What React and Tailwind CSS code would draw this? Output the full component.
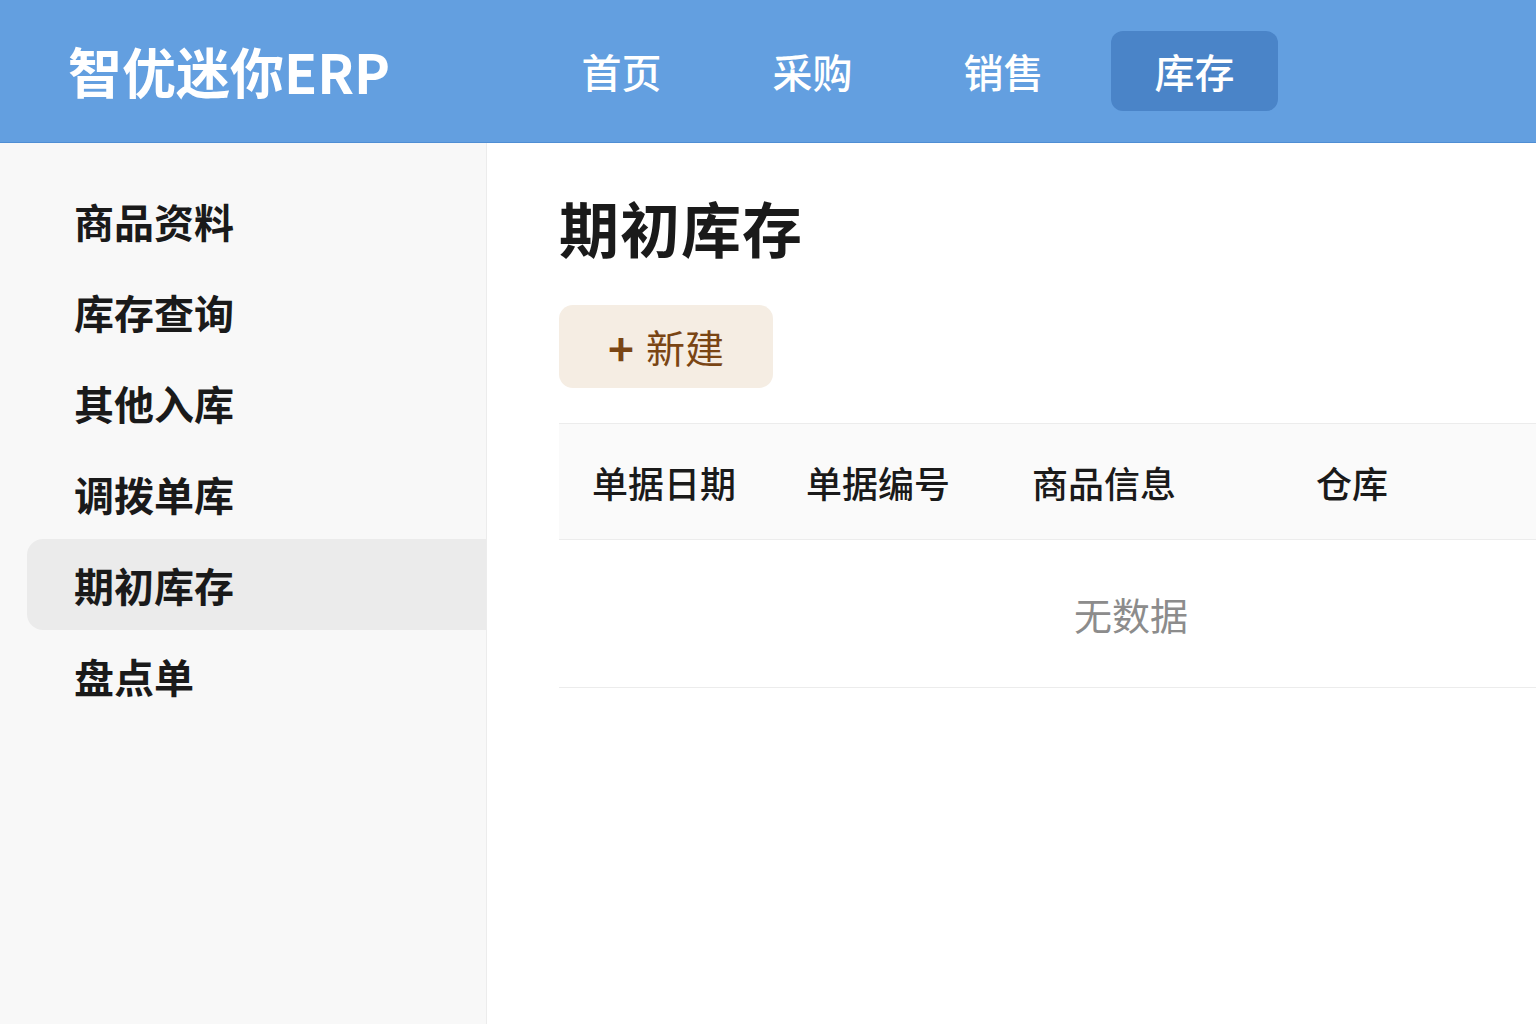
import React from 'react';

const navItems = ['首页', '采购', '销售', '库存'];
const sideItems = ['商品资料', '库存查询', '其他入库', '调拨单库', '期初库存', '盘点单'];
const columns = [
  { label: '单据日期', w: 'w-[214px]' },
  { label: '单据编号', w: 'w-[226px]' },
  { label: '商品信息', w: 'w-[284px]' },
  { label: '仓库', w: 'w-[200px]' },
];

export default function App() {
  const activeNav = '库存';
  const activeSide = '期初库存';

  return (
    <div
      className="h-screen w-full flex flex-col overflow-hidden bg-white text-[#1a1a1a]"
      style={{ fontFamily: '"Noto Sans CJK SC", "Noto Sans", sans-serif' }}
    >
      {/* Header */}
      <header className="h-[143px] flex-shrink-0 flex items-center bg-[#639fe0] border-b border-[#4f8ed4]">
        <div className="w-[538px] pl-[68px] text-white text-[54px] font-bold leading-none">
          智优迷你ERP
        </div>
        <nav className="flex items-center gap-[24px]">
          {navItems.map((item) => (
            <div
              key={item}
              className={`w-[167px] h-[80px] flex items-center justify-center rounded-[12px] text-white text-[40px] font-medium leading-none ${
                item === activeNav ? 'bg-[#4a84c8]' : ''
              }`}
            >
              {item}
            </div>
          ))}
        </nav>
      </header>

      <div className="flex-1 flex min-h-0">
        {/* Sidebar */}
        <aside className="w-[487px] flex-shrink-0 bg-[#f8f8f8] border-r border-[#ececec] pt-[32px]">
          <ul>
            {sideItems.map((item) => (
              <li
                key={item}
                className={`ml-[27px] h-[91px] flex items-center pl-[47px] text-[40px] font-semibold leading-none rounded-l-[16px] ${
                  item === activeSide ? 'bg-[#ebebeb]' : ''
                }`}
              >
                {item}
              </li>
            ))}
          </ul>
        </aside>

        {/* Main */}
        <main className="flex-1 min-w-0 overflow-hidden pl-[72px] pt-[54px]">
          <h1 className="text-[60px] font-bold leading-none tracking-[1px]">期初库存</h1>

          <button
            type="button"
            className="mt-[48px] w-[214px] h-[83px] flex items-center justify-center gap-[12px] rounded-[14px] bg-[#f5ede3] text-[#7a4514] text-[39px] leading-none"
          >
            <span className="text-[44px] font-semibold">+</span>
            <span>新建</span>
          </button>

          {/* Table */}
          <div className="mt-[35px] w-[1144px]">
            <div className="h-[117px] flex items-center pl-[33px] bg-[#fafafa] border-t border-b border-[#ececec]">
              {columns.map((c) => (
                <div key={c.label} className={`${c.w} text-[36px] font-medium leading-none`}>
                  {c.label}
                </div>
              ))}
            </div>
            <div className="h-[148px] flex items-center justify-center border-b border-[#ececec]">
              <span className="text-[38px] text-[#8c8c8c] leading-none">无数据</span>
            </div>
          </div>
        </main>
      </div>
    </div>
  );
}
